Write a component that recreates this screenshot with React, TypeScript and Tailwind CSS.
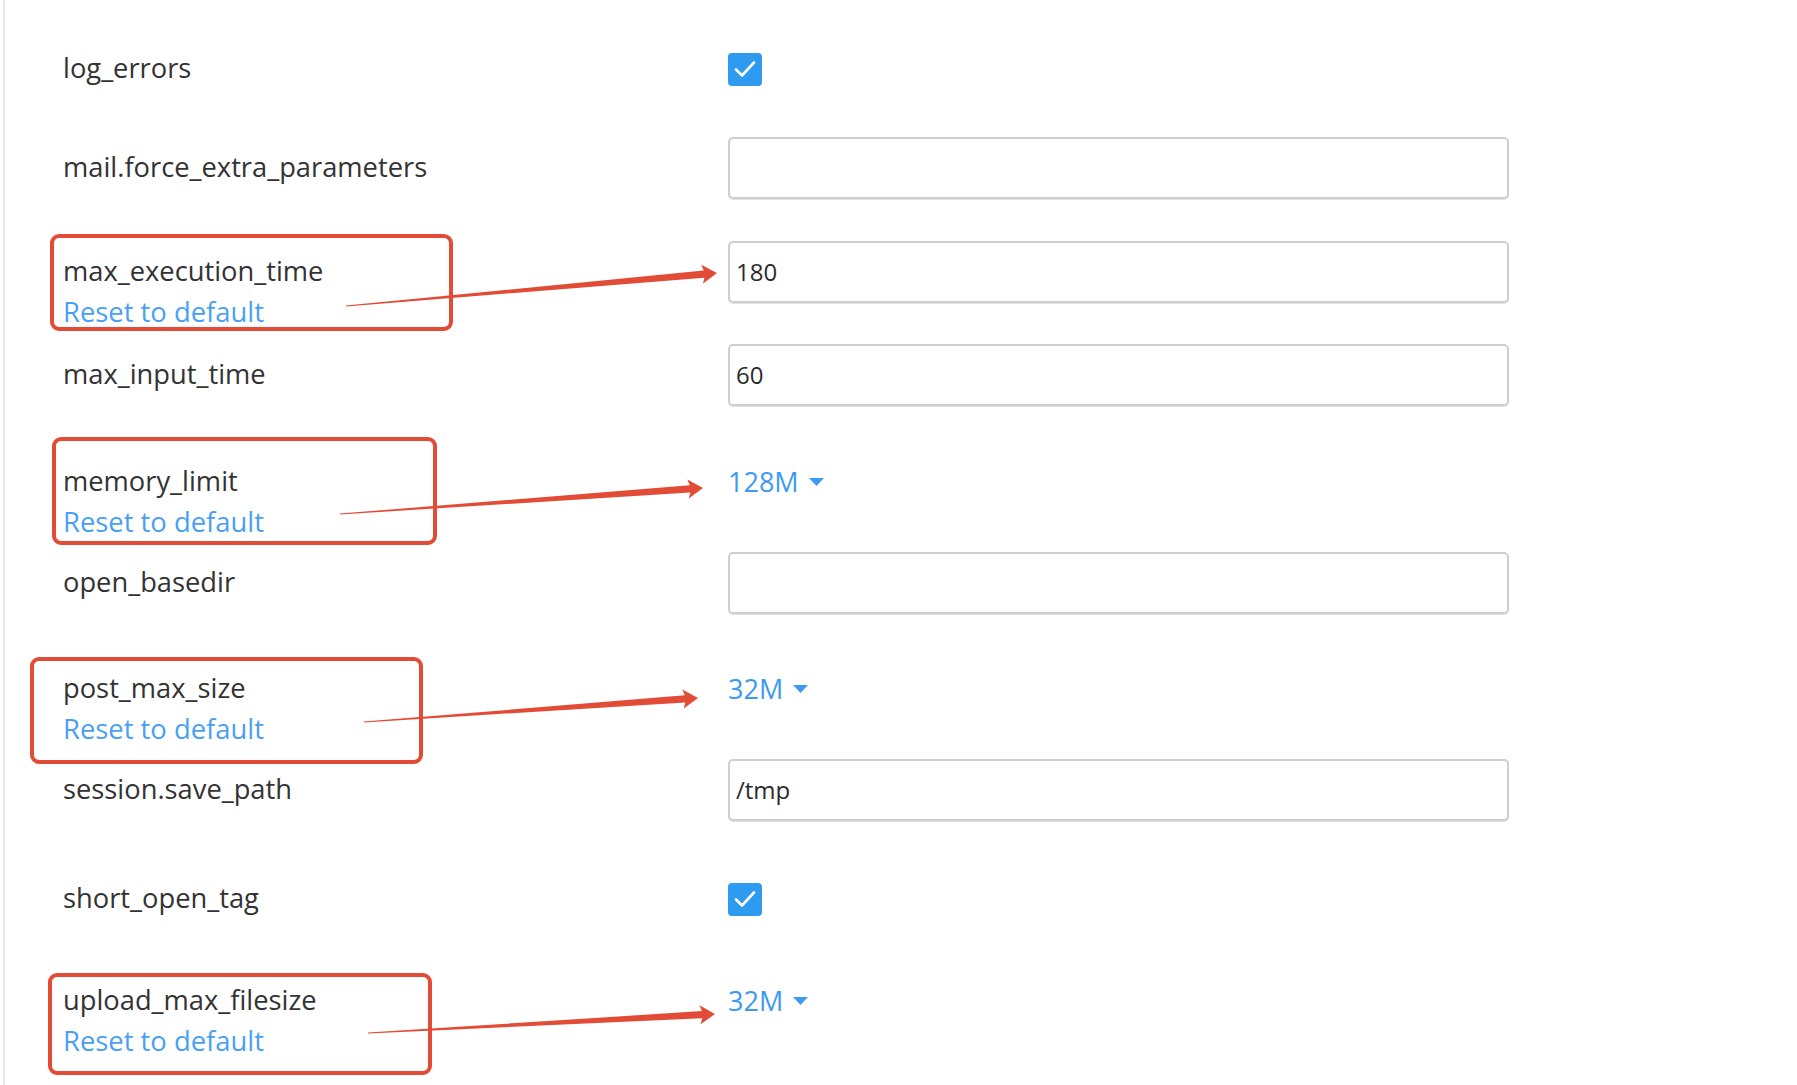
import React from "react";

type Row = {
  name: string;
  kind: "check" | "input" | "select";
  value?: string;
  reset?: boolean;
  height: string;
};

// row heights are spelled out so Tailwind picks them up
const rows: Row[] = [
  { name: "log_errors", kind: "check", height: "h-[99px]" },
  { name: "mail.force_extra_parameters", kind: "input", value: "", height: "h-[104px]" },
  { name: "max_execution_time", kind: "input", value: "180", reset: true, height: "h-[103px]" },
  { name: "max_input_time", kind: "input", value: "60", height: "h-[107px]" },
  { name: "memory_limit", kind: "select", value: "128M", reset: true, height: "h-[101px]" },
  { name: "open_basedir", kind: "input", value: "", height: "h-[106px]" },
  { name: "post_max_size", kind: "select", value: "32M", reset: true, height: "h-[101px]" },
  { name: "session.save_path", kind: "input", value: "/tmp", height: "h-[109px]" },
  { name: "short_open_tag", kind: "check", height: "h-[102px]" },
  { name: "upload_max_filesize", kind: "select", value: "32M", reset: true, height: "h-[115px]" },
];

// annotation boxes (page coordinates)
const boxes = [
  { x: 50, y: 234, w: 403, h: 97 },
  { x: 52, y: 437, w: 385, h: 108 },
  { x: 30, y: 657, w: 393, h: 107 },
  { x: 48, y: 973, w: 384, h: 102 },
];

const arrows = [
  { x1: 346, y1: 306, x2: 717, y2: 273 },
  { x1: 340, y1: 514, x2: 703, y2: 488 },
  { x1: 364, y1: 722, x2: 698, y2: 698 },
  { x1: 368, y1: 1033, x2: 715, y2: 1014 },
];

function arrowPoints(a: { x1: number; y1: number; x2: number; y2: number }) {
  const dx = a.x2 - a.x1;
  const dy = a.y2 - a.y1;
  const len = Math.hypot(dx, dy);
  const ux = dx / len;
  const uy = dy / len;
  const nx = -uy;
  const ny = ux;
  const headLen = 13;
  const headHalf = 9.5;
  const shaftHalf = 3.6;
  const bx = a.x2 - ux * headLen;
  const by = a.y2 - uy * headLen;
  const pts = [
    [a.x1 + nx * 0.4, a.y1 + ny * 0.4],
    [bx + nx * shaftHalf, by + ny * shaftHalf],
    [bx + nx * headHalf - ux * 2, by + ny * headHalf - uy * 2],
    [a.x2, a.y2],
    [bx - nx * headHalf - ux * 2, by - ny * headHalf - uy * 2],
    [bx - nx * shaftHalf, by - ny * shaftHalf],
    [a.x1 - nx * 0.4, a.y1 - ny * 0.4],
  ];
  return pts.map((p) => p.join(",")).join(" ");
}

function Checkbox() {
  return (
    <div className="w-[34px] h-[33px] rounded-[4px] bg-[#2f9bf0] flex items-center justify-center">
      <svg width="24" height="20" viewBox="0 0 24 20" fill="none">
        <path d="M3 10.5 L9 16.5 L21 3.5" stroke="white" strokeWidth="2.6" strokeLinecap="round" strokeLinejoin="round" />
      </svg>
    </div>
  );
}

function TextInput({ value }: { value: string }) {
  return (
    <div className="w-[781px] h-[62px] border-2 border-[#cfcfcf] rounded-[5px] bg-white flex items-center pl-[6px] text-[24px] text-[#2b2b2b] shadow-[0_1px_0_#e4e4e4]">
      {value}
    </div>
  );
}

function Select({ value }: { value: string }) {
  return (
    <div className="flex items-center gap-[10px] text-[27px] text-[#3c9af2]">
      <span>{value}</span>
      <svg width="15" height="8" viewBox="0 0 15 8">
        <polygon points="0,0 15,0 7.5,8" fill="#3c9af2" />
      </svg>
    </div>
  );
}

export default function App() {
  return (
    <div className="relative w-[1797px] h-[1085px] overflow-hidden bg-white" style={{ fontFamily: "'Open Sans', 'Noto Sans', sans-serif" }}>
      <div className="ml-[3px] h-full border-l-2 border-[#e9e9e9] pt-[38px] pl-[58px]">
        {rows.map((row) => (
          <div key={row.name} className={`grid grid-cols-[665px_781px] items-start ${row.height}`}>
            <div className="pt-[10px]">
              <div className="text-[27.3px] leading-[40px] text-[#333333]">{row.name}</div>
              {row.reset && (
                <div className="text-[27.4px] leading-[42px] text-[#4a9ff5]">Reset to default</div>
              )}
            </div>
            <div className="h-[62px] flex items-center">
              {row.kind === "check" && <Checkbox />}
              {row.kind === "input" && <TextInput value={row.value ?? ""} />}
              {row.kind === "select" && <Select value={row.value ?? ""} />}
            </div>
          </div>
        ))}
      </div>

      {/* annotation layer */}
      {boxes.map((b, i) => (
        <div
          key={i}
          className="absolute border-4 border-[#e24c37] rounded-[9px]"
          style={{ left: b.x, top: b.y, width: b.w, height: b.h }}
        />
      ))}
      <svg className="absolute inset-0 pointer-events-none" width="1797" height="1085">
        {arrows.map((a, i) => (
          <polygon key={i} points={arrowPoints(a)} fill="#e24c37" />
        ))}
      </svg>
    </div>
  );
}
